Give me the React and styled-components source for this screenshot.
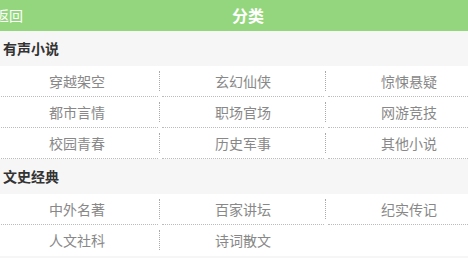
import React from 'react';
import styled, { createGlobalStyle } from 'styled-components';

const GlobalStyle = createGlobalStyle`
  html, body {
    margin: 0;
    padding: 0;
    background: #f6f6f6;
    overflow: hidden;
  }
  body {
    font-family: "Noto Sans CJK SC", "Liberation Sans", sans-serif;
  }
`;

const Page = styled.div`
  width: 498px;
  margin-left: -6px;
  background: #fff;
`;

const Header = styled.div`
  height: 31px;
  background-color: #94d67e;
  display: grid;
  grid-template-columns: 1fr auto 1fr;
  align-items: center;
  color: #fff;
`;

const Back = styled.span`
  font-size: 14px;
  padding-left: 1px;
  line-height: 31px;
`;

const Title = styled.h1`
  margin: 0;
  padding-left: 10px;
  font-size: 16px;
  font-weight: bold;
  line-height: 31px;
`;

const SectionTitle = styled.h2`
  margin: 0;
  height: 35px;
  line-height: 35px;
  padding-left: 9px;
  background-color: #f6f6f6;
  color: #333;
  font-size: 14px;
  font-weight: bold;
`;

const List = styled.ul`
  margin: 0;
  padding: 0;
  list-style: none;
  display: grid;
  grid-template-columns: repeat(3, 166px);
`;

const Item = styled.li`
  position: relative;
  height: 31px;

  &::after {
    content: '';
    position: absolute;
    right: 0;
    top: 5px;
    height: 20px;
    border-right: 1px dotted #aaa;
    display: ${(p) => (p.$divider ? 'block' : 'none')};
  }
`;

const Link = styled.a`
  display: block;
  margin: 0 2px;
  height: 30px;
  line-height: 30px;
  text-align: center;
  color: #888;
  font-size: 14px;
  text-decoration: none;
  border-bottom: 1px dotted ${(p) => (p.$noLine ? 'transparent' : '#bbb')};
`;

const sections = [
  {
    name: '有声小说',
    items: ['穿越架空', '玄幻仙侠', '惊悚悬疑', '都市言情', '职场官场', '网游竞技', '校园青春', '历史军事', '其他小说'],
  },
  {
    name: '文史经典',
    items: ['中外名著', '百家讲坛', '纪实传记', '人文社科', '诗词散文'],
    open: true,
  },
];

function Section({ name, items, open }) {
  const lastRowStart = Math.floor((items.length - 1) / 3) * 3;
  return (
    <>
      <SectionTitle>{name}</SectionTitle>
      <List>
        {items.map((item, i) => (
          <Item key={item} $divider={i % 3 !== 2 && i !== items.length - 1}>
            <Link href="#" $noLine={open && i >= lastRowStart}>{item}</Link>
          </Item>
        ))}
      </List>
    </>
  );
}

export default function App() {
  return (
    <>
      <GlobalStyle />
      <Page>
        <Header>
          <Back>返回</Back>
          <Title>分类</Title>
          <span />
        </Header>
        {sections.map((s) => (
          <Section key={s.name} {...s} />
        ))}
      </Page>
    </>
  );
}
